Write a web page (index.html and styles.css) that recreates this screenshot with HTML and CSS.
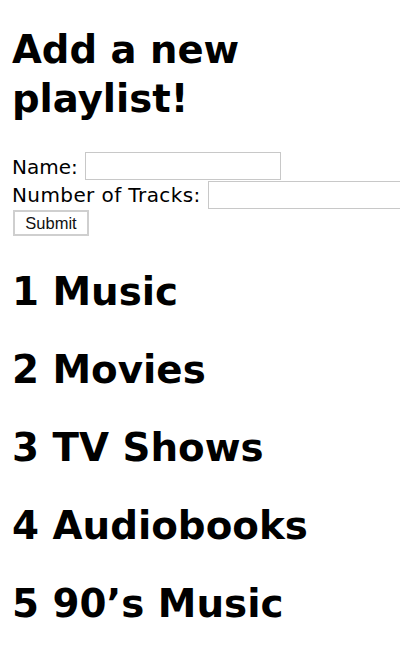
FILE: index.html
```html
<!DOCTYPE html>
<html>
<head>
<meta charset="utf-8">
<link rel="stylesheet" href="styles.css">
</head>
<body>
<h1 class="title">Add a new playlist!</h1>
<form class="form">
  <div class="row"><label class="label name-label">Name:</label><input class="field name-field" type="text"></div>
  <div class="row"><label class="label tracks-label">Number of Tracks:</label><input class="field tracks-field" type="text"></div>
  <div class="row"><button class="submit" type="button">Submit</button></div>
</form>
<ul class="list">
  <li class="item">1 Music</li>
  <li class="item">2 Movies</li>
  <li class="item">3 TV Shows</li>
  <li class="item">4 Audiobooks</li>
  <li class="item">5 90’s Music</li>
</ul>
</body>
</html>
```
FILE: styles.css
```css
html, body {
  margin: 0;
  padding: 0;
  background: #fff;
  overflow: hidden;
}
body {
  padding: 0 0 0 12px;
  font-family: "DejaVu Sans", Verdana, sans-serif;
  color: #000;
  width: 400px;
  box-sizing: border-box;
}
.title {
  margin: 25px 0 0 0;
  font-size: 38.6px;
  line-height: 49px;
  font-weight: bold;
}
.form {
  margin: 29px 0 0 0;
  display: flex;
  flex-direction: column;
}
.row {
  display: flex;
  align-items: center;
  font-size: 20px;
  white-space: nowrap;
}
.name-label {
  margin-right: 7px;
}
.tracks-label {
  letter-spacing: 0.4px;
  margin-right: 7px;
}
.field {
  box-sizing: border-box;
  height: 28px;
  border: 1px solid #c8c8c8;
  padding: 0;
  margin: 0;
  background: #fff;
  flex: none;
}
.name-field {
  width: 196px;
  margin-bottom: 1px;
}
.tracks-field {
  flex: 1 0 0;
  min-width: 0;
  border-right: none;
}
.submit {
  box-sizing: border-box;
  margin: 1px 0 0 1px;
  width: 76px;
  height: 26px;
  border: 2px solid #cfcfcf;
  background: #fff;
  font-family: "Liberation Sans", Arial, sans-serif;
  font-size: 16.5px;
  color: #111;
  padding: 0;
}
.list {
  list-style: none;
  margin: 33px 0 0 0;
  padding: 0;
  display: flex;
  flex-direction: column;
  gap: 32px;
}
.item {
  font-size: 38.8px;
  line-height: 46px;
  font-weight: bold;
  white-space: nowrap;
}
```
